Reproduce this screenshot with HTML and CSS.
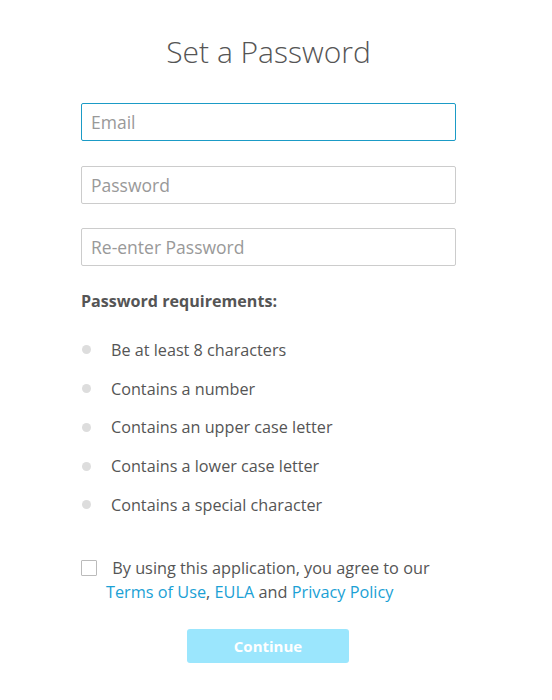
FILE: index.html
```html
<!DOCTYPE html>
<html>
<head>
<meta charset="utf-8">
<link rel="stylesheet" href="styles.css">
</head>
<body>
<div class="page">
  <form class="form">
    <h1 class="title">Set a Password</h1>
    <div class="field field-focus">Email</div>
    <div class="field">Password</div>
    <div class="field">Re-enter Password</div>
    <div class="req-title">Password requirements:</div>
    <ul class="req-list">
      <li class="req">Be at least 8 characters</li>
      <li class="req">Contains a number</li>
      <li class="req">Contains an upper case letter</li>
      <li class="req">Contains a lower case letter</li>
      <li class="req">Contains a special character</li>
    </ul>
    <p class="agree"><span class="checkbox"></span> By using this application, you agree to our <a class="link">Terms of Use</a>, <a class="link">EULA</a> and <a class="link">Privacy Policy</a></p>
    <div class="actions"><button type="button" class="btn">Continue</button></div>
  </form>
</div>
</body>
</html>
```
FILE: styles.css
```css
html, body {
  margin: 0;
  padding: 0;
  background: #fff;
}
body {
  font-family: "Open Sans", "DejaVu Sans", sans-serif;
  color: #555;
}
.page {
  width: 537px;
  display: flex;
  justify-content: center;
}
.form {
  width: 375px;
  display: flex;
  flex-direction: column;
}
.title {
  margin: 32px 0 31px;
  font-size: 30px;
  line-height: 40px;
  font-weight: 300;
  text-align: center;
  color: #555;
}
.field {
  box-sizing: border-box;
  height: 38px;
  border: 1px solid #ccc;
  border-radius: 2px;
  padding: 0 9px;
  font-size: 17.5px;
  line-height: 36px;
  color: #999;
  margin-bottom: 24.5px;
}
.field-focus {
  border-color: #1b9bc6;
}
.req-title {
  margin-top: -0.5px;
  font-size: 16.1px;
  line-height: 22px;
  font-weight: 700;
  color: #555;
}
.req-list {
  list-style: none;
  margin: 18.5px 0 0;
  padding: 0;
}
.req {
  display: flex;
  align-items: center;
  height: 38.75px;
  font-size: 16.2px;
  color: #555;
}
.req::before {
  content: "";
  width: 9px;
  height: 9px;
  border-radius: 50%;
  background: #ddd;
  margin: 0 20px 0 1px;
}
.agree {
  margin: 32px 0 0;
  padding-left: 25px;
  font-size: 16.3px;
  line-height: 24px;
  color: #555;
}
.checkbox {
  display: inline-block;
  box-sizing: border-box;
  width: 16px;
  height: 16px;
  border: 1px solid #bbb;
  border-radius: 1px;
  margin-left: -25px;
  margin-right: 11px;
  vertical-align: -2px;
}
.link {
  color: #1ba1d5;
  text-decoration: none;
}
.actions {
  display: flex;
  justify-content: center;
  margin-top: 25px;
  padding-right: 1px;
}
.btn {
  width: 162px;
  height: 34px;
  border: 0;
  border-radius: 3px;
  background: #9be6fd;
  color: #fff;
  font-family: "Open Sans", sans-serif;
  font-size: 15px;
  font-weight: 700;
}
```
